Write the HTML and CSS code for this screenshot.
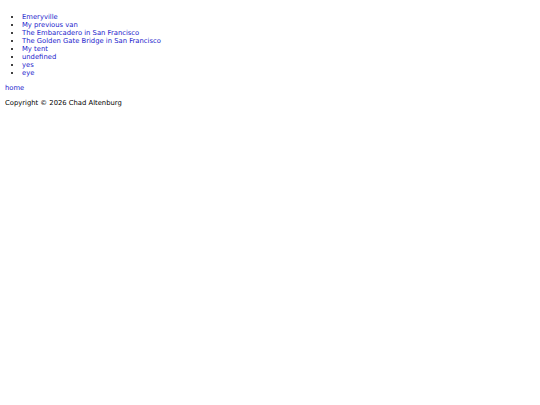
FILE: index.html
```html
<!DOCTYPE html>
<html>
<head>
<meta charset="utf-8">
<link rel="stylesheet" href="styles.css">
</head>
<body class="page">
<ul class="list">
<li><a class="link" href="#">Emeryville</a></li>
<li><a class="link" href="#">My previous van</a></li>
<li><a class="link" href="#">The Embarcadero in San Francisco</a></li>
<li><a class="link" href="#">The Golden Gate Bridge in San Francisco</a></li>
<li><a class="link" href="#">My tent</a></li>
<li><a class="link" href="#">undefined</a></li>
<li><a class="link" href="#">yes</a></li>
<li><a class="link" href="#">eye</a></li>
</ul>
<p class="block"><a class="link" href="#">home</a></p>
<p class="block">Copyright © 2026 Chad Altenburg</p>
</body>
</html>
```
FILE: styles.css
```css
.page {
  margin: 6px 5px 5px 5px;
  font-family: "DejaVu Sans", Verdana, sans-serif;
  font-size: 6.8px;
  line-height: 8px;
  color: #000;
  background: #fff;
}
.list {
  margin: 7px 0;
  padding-left: 17px;
}
.block {
  margin: 7px 0;
}
.link {
  color: #1a1acc;
  text-decoration: none;
}
```
